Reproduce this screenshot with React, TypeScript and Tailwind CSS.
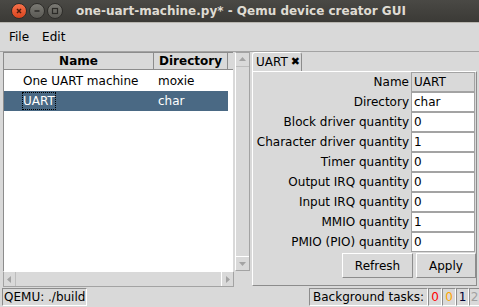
import React from "react"

const rows: [string, string, boolean?][] = [
  ["Name", "UART", true],
  ["Directory", "char"],
  ["Block driver quantity", "0"],
  ["Character driver quantity", "1"],
  ["Timer quantity", "0"],
  ["Output IRQ quantity", "0"],
  ["Input IRQ quantity", "0"],
  ["MMIO quantity", "1"],
  ["PMIO (PIO) quantity", "0"],
]

function Arrow({ dir }: { dir: "up" | "down" | "left" | "right" }) {
  const pts = {
    up: "2,7 5.5,3 9,7",
    down: "2,4 5.5,8 9,4",
    left: "7,2 3,5.5 7,9",
    right: "4,2 8,5.5 4,9",
  }[dir]
  return (
    <svg width="11" height="11" viewBox="0 0 11 11">
      <polygon points={pts} fill="#a3a3a3" />
    </svg>
  )
}

function WinButton({ color, children }: { color: string; children: React.ReactNode }) {
  return (
    <div className={`w-[16px] h-[16px] rounded-full flex items-center justify-center border border-[#2e2d2a] ${color}`}>
      <svg width="10" height="10" viewBox="0 0 10 10">{children}</svg>
    </div>
  )
}

export default function App() {
  return (
    <div className="w-[479px] h-[307px] bg-[#d9d9d9] flex flex-col overflow-hidden text-[12px] text-black" style={{ fontFamily: "'DejaVu Sans', sans-serif" }}>
      {/* Title bar */}
      <div className="h-[23px] shrink-0 bg-gradient-to-b from-[#4a4945] to-[#3b3a36] flex items-center border-b border-[#b8b6b0]">
        <div className="flex items-center gap-[2px] pl-[11px]">
          <WinButton color="bg-gradient-to-b from-[#f6714a] to-[#d9431c]">
            <path d="M3 3 L7 7 M7 3 L3 7" stroke="#4a1a0c" strokeWidth="1.5" />
          </WinButton>
          <WinButton color="bg-gradient-to-b from-[#7b7a74] to-[#5a5954]">
            <path d="M2.5 5 H7.5" stroke="#2b2a27" strokeWidth="1.5" />
          </WinButton>
          <WinButton color="bg-gradient-to-b from-[#7b7a74] to-[#5a5954]">
            <rect x="2.5" y="2.5" width="5" height="5" fill="none" stroke="#2b2a27" strokeWidth="1.2" />
          </WinButton>
        </div>
        <div className="ml-[13px] text-[#dfdbd2] font-bold text-[12px]" style={{ fontFamily: "'DejaVu Sans', sans-serif" }}>
          one-uart-machine.py* - Qemu device creator GUI
        </div>
      </div>

      {/* Menu bar */}
      <div className="h-[29px] shrink-0 flex items-center gap-[13px] pl-[9px] border-b border-[#a3a3a3]">
        <span>File</span>
        <span>Edit</span>
      </div>

      {/* Main area */}
      <div className="flex h-[235px] shrink-0">
        {/* Left tree */}
        <div className="w-[250px] pl-[3px] flex flex-col">
          <div className="flex h-[219px]">
            <div className="w-[230px] bg-white border-l border-t border-[#8c8c8c] flex flex-col">
              <div className="flex h-[17px] bg-[#d9d9d9] font-bold">
                <div className="w-[150px] text-center border-r border-b border-[#8c8c8c] leading-[16px]">Name</div>
                <div className="w-[74px] text-center border-r border-b border-[#8c8c8c] leading-[16px]">Directory</div>
                <div className="flex-1 border-b border-[#8c8c8c]" />
              </div>
              <div className="flex h-[21px] items-center">
                <div className="w-[150px] pl-[19px]">One UART machine</div>
                <div className="pl-[4px]">moxie</div>
              </div>
              <div className="flex h-[20px] items-center w-[224px] bg-[#4a6984] text-white">
                <div className="w-[150px] pl-[19px]">
                  <span className="outline-1 outline-dotted outline-black leading-[16px] inline-block">UART</span>
                </div>
                <div className="pl-[4px]">char</div>
              </div>
            </div>
            <div className="ml-[2px] w-[15px] bg-[#d9d9d9] border border-[#a3a3a3] border-l-white flex flex-col justify-between">
              <div className="h-[14px] flex items-center justify-center border-b border-[#bdbdbd]"><Arrow dir="up" /></div>
              <div className="h-[14px] flex items-center justify-center border-t border-white"><Arrow dir="down" /></div>
            </div>
          </div>
          <div className="w-[231px] h-[16px] border border-[#a3a3a3] border-t-white flex justify-between bg-[#d9d9d9]">
            <div className="w-[12px] flex items-center justify-center border-r border-[#bdbdbd]"><Arrow dir="left" /></div>
            <div className="w-[12px] flex items-center justify-center border-l border-white"><Arrow dir="right" /></div>
          </div>
        </div>

        {/* Right notebook */}
        <div className="flex-1 flex flex-col pl-[2px] pr-[2px]">
          <div className="h-[19px] flex">
            <div className="w-[50px] h-[19px] border border-b-0 border-white border-r-[#8c8c8c] rounded-t-[3px] pl-[3px] leading-[18px] flex items-center gap-[3px]">
              <span>UART</span>
              <span className="font-bold text-[11px]">✖</span>
            </div>
          </div>
          <div className="h-[215px] border border-white border-r-[#8c8c8c] border-b-[#8c8c8c] flex flex-col">
            {rows.map(([label, value, ro]) => (
              <div key={label} className="h-[20px] flex items-center">
                <div className="w-[158px] text-right pr-[2px]">{label}</div>
                <div className={`w-[64px] h-[20px] border border-[#a3a3a3] pl-[2px] leading-[18px] ${ro ? "bg-[#d9d9d9]" : "bg-white"}`}>{value}</div>
              </div>
            ))}
            <div className="flex justify-end gap-[3px] pr-[0px] mt-[1px]">
              <div className="w-[71px] h-[25px] border border-white border-r-[#8c8c8c] border-b-[#8c8c8c] flex items-center justify-center">Refresh</div>
              <div className="w-[60px] h-[25px] border border-white border-r-[#8c8c8c] border-b-[#8c8c8c] flex items-center justify-center">Apply</div>
            </div>
          </div>
        </div>
      </div>

      {/* Status bar */}
      <div className="flex items-end h-[20px] pb-[1px] pl-[2px]">
        <div className="h-[18px] w-[85px] border border-[#8c8c8c] border-r-white border-b-white pl-[1px] leading-[16px]">QEMU: ./build</div>
        <div className="flex-1" />
        <div className="h-[18px] border border-[#8c8c8c] border-r-white border-b-white px-[3px] leading-[16px]">Background tasks:</div>
        <div className="h-[18px] w-[14px] border border-[#8c8c8c] border-r-white border-b-white text-center leading-[16px] text-[#ff0000]">0</div>
        <div className="h-[18px] w-[14px] border border-[#8c8c8c] border-r-white border-b-white text-center leading-[16px] text-[#ffa500]">0</div>
        <div className="h-[18px] w-[13px] border border-[#8c8c8c] border-r-white border-b-white text-center leading-[16px] text-[#000033]">1</div>
        <div className="h-[18px] w-[10px] border border-[#8c8c8c] border-r-0 border-b-white text-center leading-[16px] text-[#a0a0a0]">2</div>
      </div>
    </div>
  )
}
